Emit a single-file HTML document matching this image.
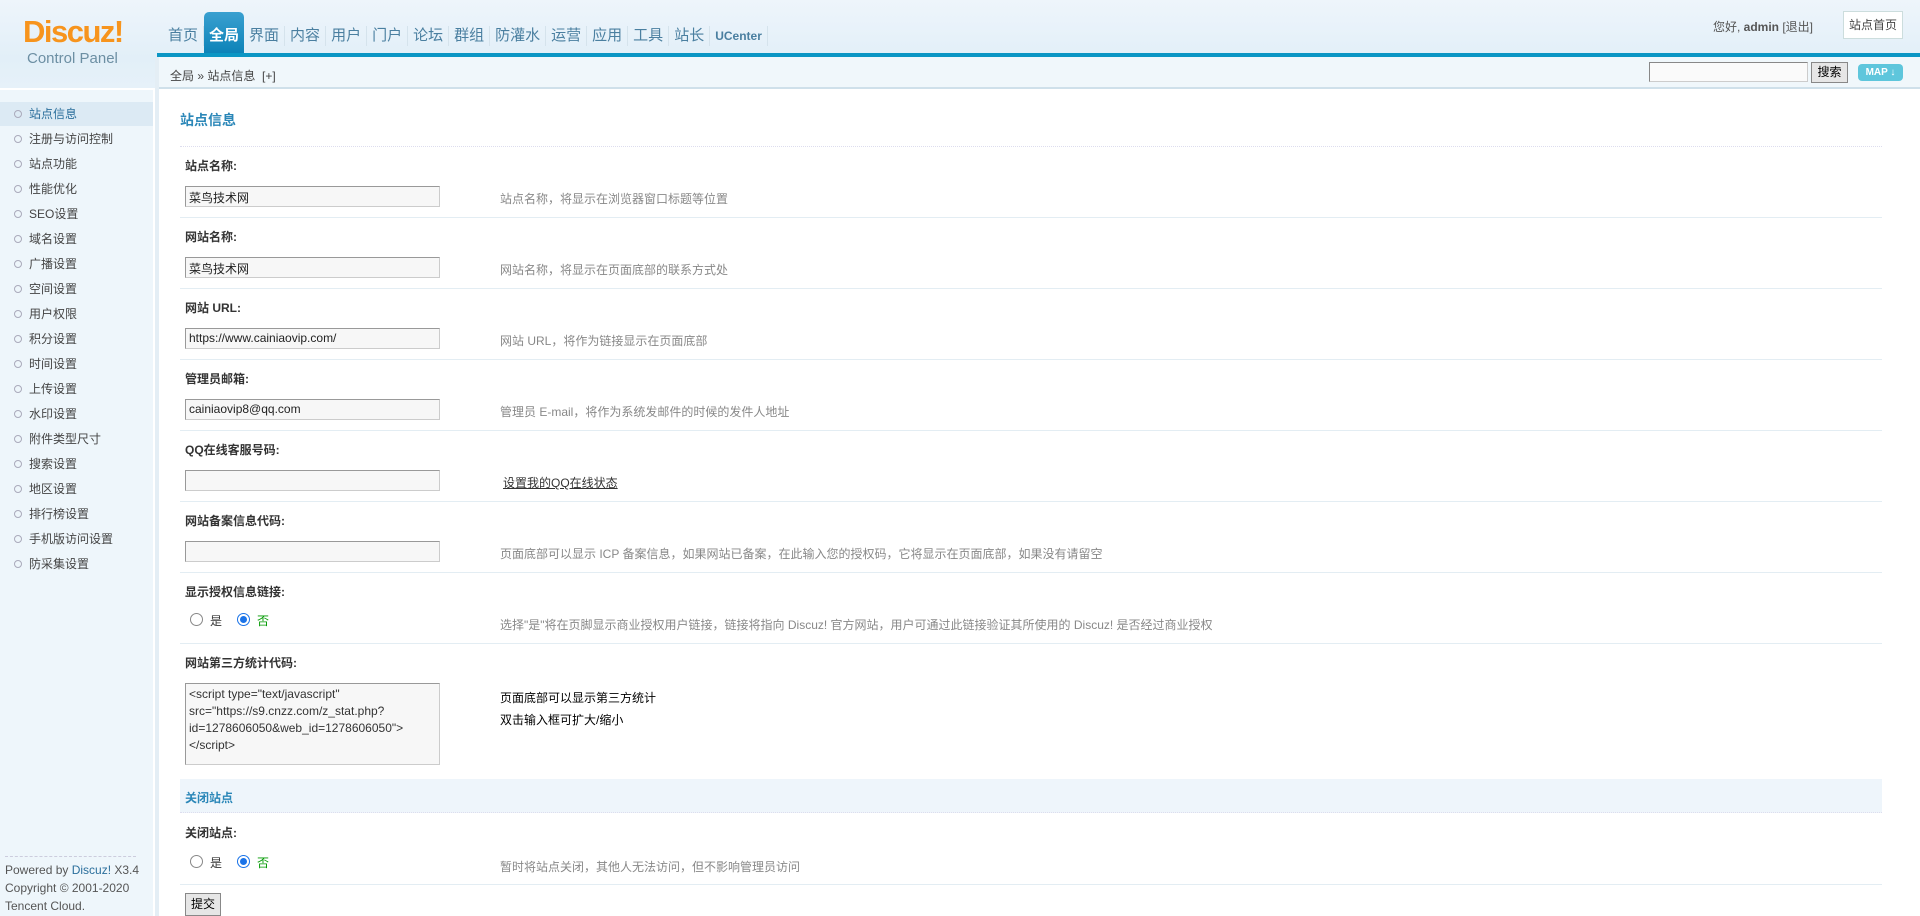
<!DOCTYPE html>
<html><head><meta charset="utf-8"><style>
*{margin:0;padding:0;box-sizing:border-box}
body{width:1920px;height:916px;overflow:hidden;position:relative;background:#fff;font:12px "Liberation Sans","Noto Sans CJK SC",sans-serif;color:#333}
.a{position:absolute;white-space:nowrap}
#hd{left:0;top:0;width:1920px;height:58px;background:linear-gradient(#eef5fb,#e2eff8)}
#hl{left:0;top:58px;width:157px;height:30px;background:linear-gradient(#e2eff8,#e6f1f9)}
.logo{left:23px;top:14px;font:bold 31px "Liberation Sans",sans-serif;color:#f7941d;letter-spacing:-1.5px}
.cp{left:27px;top:50px;font-size:15px;color:#6c8fa3}
.nav{left:163px;top:26px;font-size:15px;color:#4a7fa0}
.nav span{display:inline-block;padding:0 5px;border-right:1px solid #d5e3ec;line-height:20px}
.nav span.on{background:linear-gradient(#3aa0d0,#0d83b8);color:#fff;font-weight:bold;padding:14px 5px 7px;margin-top:-14px;border-radius:5px 5px 0 0;border:0}
#bar{left:157px;top:53px;width:1763px;height:4px;background:#0b96c4}
#bc{left:157px;top:57px;width:1763px;height:32px;background:#f0f7fb;border-bottom:2px solid #cfe0ea}
#side{left:0;top:90px;width:153px;height:826px;background:#eef6fb}
#sl{left:155px;top:57px;width:4px;height:859px;background:#e4eef5}
.si{left:0;width:153px;height:24px;line-height:24px;padding-left:29px;font-size:12px;color:#444}
.si:before{content:"";position:absolute;left:14px;top:8px;width:6px;height:6px;border:1px solid #aab;border-radius:50%}
.si.on{background:#dceaf4;color:#2b6f9c}
.lb{left:185px;font-weight:bold;font-size:12px;color:#333}
.in{left:185px;width:255px;height:21px;border:1px solid #999;border-right-color:#ccc;border-bottom-color:#ccc;background:#f7f7f7;padding:2px 3px;font-size:12px;color:#222}
.ds{left:500px;color:#888;font-size:12px}
.ln{left:180px;width:1702px;height:1px;background:#e3edf3}
.rd{width:13px;height:13px;border:1px solid #888;border-radius:50%;background:#fff}
.rd.on{border:1px solid #1a73e8}
.rd.on:after{content:"";position:absolute;left:2px;top:2px;width:7px;height:7px;border-radius:50%;background:#1a73e8}
</style></head><body>
<div id="hd" class="a"></div>
<div id="hl" class="a"></div>
<div class="a logo">Discuz!</div>
<div class="a cp">Control Panel</div>
<div class="a nav"><span>首页</span><span class="on">全局</span><span>界面</span><span>内容</span><span>用户</span><span>门户</span><span>论坛</span><span>群组</span><span>防灌水</span><span>运营</span><span>应用</span><span>工具</span><span>站长</span><span style="font-size:12px;font-weight:bold">UCenter</span></div>
<div class="a" style="left:1713px;top:18px;font-size:12px;color:#555">您好, <b>admin</b> [退出]</div>
<div class="a" style="left:1843px;top:11px;width:60px;height:28px;border:1px solid #cdd;background:#fff;line-height:26px;text-align:center;color:#444">站点首页</div>
<div id="bar" class="a"></div>
<div id="bc" class="a"></div>
<div class="a" style="left:170px;top:67px;color:#444">全局 » 站点信息 &nbsp;[+]</div>
<div class="a" style="left:1649px;top:62px;width:159px;height:20px;border:1px solid #888;border-right-color:#ccc;border-bottom-color:#ccc;background:#fafafa"></div>
<div class="a" style="left:1811px;top:62px;width:37px;height:21px;border:1px solid #888;background:#e6e6e6;text-align:center;line-height:19px;color:#000">搜索</div>
<div class="a" style="left:1858px;top:64px;width:45px;height:17px;border-radius:4px;background:#5ec6dc;color:#fff;font-size:10px;font-weight:bold;text-align:center;line-height:17px">MAP ↓</div>
<div id="side" class="a"></div>
<div id="sl" class="a"></div>
<div class="a si on" style="top:102px">站点信息</div>
<div class="a si" style="top:127px">注册与访问控制</div>
<div class="a si" style="top:152px">站点功能</div>
<div class="a si" style="top:177px">性能优化</div>
<div class="a si" style="top:202px">SEO设置</div>
<div class="a si" style="top:227px">域名设置</div>
<div class="a si" style="top:252px">广播设置</div>
<div class="a si" style="top:277px">空间设置</div>
<div class="a si" style="top:302px">用户权限</div>
<div class="a si" style="top:327px">积分设置</div>
<div class="a si" style="top:352px">时间设置</div>
<div class="a si" style="top:377px">上传设置</div>
<div class="a si" style="top:402px">水印设置</div>
<div class="a si" style="top:427px">附件类型尺寸</div>
<div class="a si" style="top:452px">搜索设置</div>
<div class="a si" style="top:477px">地区设置</div>
<div class="a si" style="top:502px">排行榜设置</div>
<div class="a si" style="top:527px">手机版访问设置</div>
<div class="a si" style="top:552px">防采集设置</div>
<div class="a" style="left:5px;top:856px;width:131px;border-top:1px dashed #ccd"></div>
<div class="a" style="left:5px;top:861px;line-height:18px;color:#555">Powered by <span style="color:#2b6f9c">Discuz!</span> X3.4<br>Copyright © 2001-2020<br>Tencent Cloud.</div>

<div class="a" style="left:180px;top:110px;font-size:14px;font-weight:bold;color:#2b87b8">站点信息</div>
<div class="a" style="left:180px;top:146px;width:1702px;border-top:1px dotted #dde"></div>

<div class="a lb" style="top:157px">站点名称:</div>
<div class="a in" style="top:186px">菜鸟技术网</div>
<div class="a ds" style="top:190px">站点名称，将显示在浏览器窗口标题等位置</div>
<div class="a ln" style="top:217px"></div>

<div class="a lb" style="top:228px">网站名称:</div>
<div class="a in" style="top:257px">菜鸟技术网</div>
<div class="a ds" style="top:261px">网站名称，将显示在页面底部的联系方式处</div>
<div class="a ln" style="top:288px"></div>

<div class="a lb" style="top:299px">网站 URL:</div>
<div class="a in" style="top:328px">https://www.cainiaovip.com/</div>
<div class="a ds" style="top:332px">网站 URL，将作为链接显示在页面底部</div>
<div class="a ln" style="top:359px"></div>

<div class="a lb" style="top:370px">管理员邮箱:</div>
<div class="a in" style="top:399px">cainiaovip8@qq.com</div>
<div class="a ds" style="top:403px">管理员 E-mail，将作为系统发邮件的时候的发件人地址</div>
<div class="a ln" style="top:430px"></div>

<div class="a lb" style="top:441px">QQ在线客服号码:</div>
<div class="a in" style="top:470px"></div>
<div class="a" style="left:503px;top:474px;color:#333;text-decoration:underline">设置我的QQ在线状态</div>
<div class="a ln" style="top:501px"></div>

<div class="a lb" style="top:512px">网站备案信息代码:</div>
<div class="a in" style="top:541px"></div>
<div class="a ds" style="top:545px">页面底部可以显示 ICP 备案信息，如果网站已备案，在此输入您的授权码，它将显示在页面底部，如果没有请留空</div>
<div class="a ln" style="top:572px"></div>

<div class="a lb" style="top:583px">显示授权信息链接:</div>
<div class="a rd" style="left:190px;top:613px"></div><div class="a" style="left:210px;top:612px">是</div>
<div class="a rd on" style="left:237px;top:613px"></div><div class="a" style="left:257px;top:612px;color:#090">否</div>
<div class="a ds" style="top:616px">选择"是"将在页脚显示商业授权用户链接，链接将指向 Discuz! 官方网站，用户可通过此链接验证其所使用的 Discuz! 是否经过商业授权</div>
<div class="a ln" style="top:643px"></div>

<div class="a lb" style="top:654px">网站第三方统计代码:</div>
<div class="a in" style="top:683px;height:82px;white-space:pre;line-height:17px;color:#333">&lt;script type="text/javascript"
src="https://s9.cnzz.com/z_stat.php?
id=1278606050&amp;web_id=1278606050"&gt;
&lt;/script&gt;</div>
<div class="a" style="left:500px;top:687px;line-height:22px;color:#000">页面底部可以显示第三方统计<br>双击输入框可扩大/缩小</div>

<div class="a" style="left:180px;top:779px;width:1702px;height:34px;background:#eef5fb;border-bottom:1px dotted #dde"></div>
<div class="a" style="left:185px;top:789px;font-weight:bold;color:#2b87b8">关闭站点</div>

<div class="a lb" style="top:824px">关闭站点:</div>
<div class="a rd" style="left:190px;top:855px"></div><div class="a" style="left:210px;top:854px">是</div>
<div class="a rd on" style="left:237px;top:855px"></div><div class="a" style="left:257px;top:854px;color:#090">否</div>
<div class="a ds" style="top:858px">暂时将站点关闭，其他人无法访问，但不影响管理员访问</div>
<div class="a ln" style="top:884px"></div>
<div class="a" style="left:185px;top:893px;width:36px;height:23px;border:1px solid #888;background:#e6e6e6;text-align:center;line-height:21px;color:#000">提交</div>
</body></html>
